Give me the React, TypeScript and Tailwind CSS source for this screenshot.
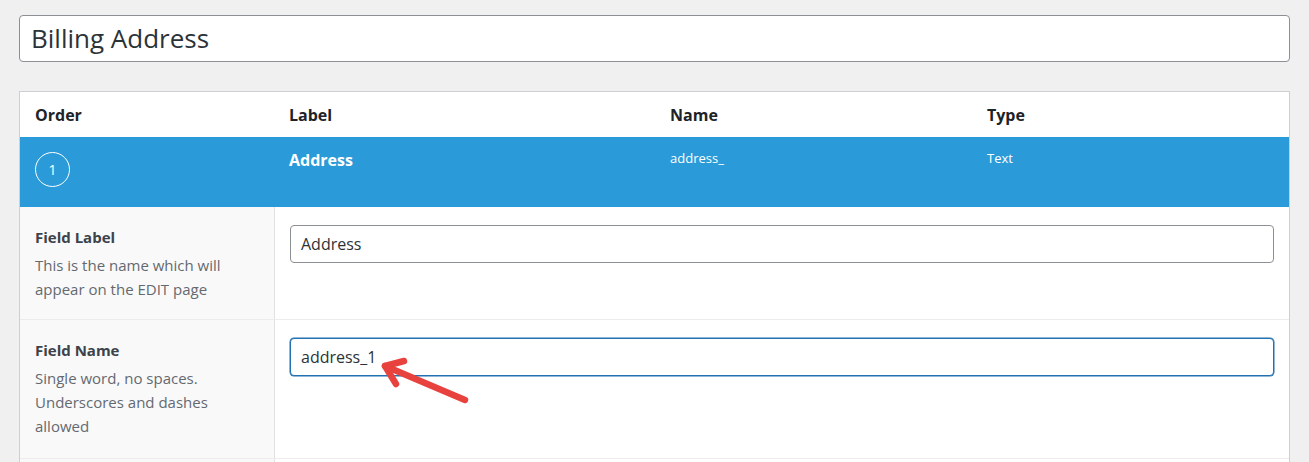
import React from 'react'

const font = { fontFamily: '"Open Sans", "Noto Sans", sans-serif' }

function ArrowMark() {
    return (
        <svg
            className="absolute left-[370px] top-[352px] pointer-events-none"
            width="110"
            height="60"
            viewBox="0 0 110 60"
            fill="none"
        >
            <g stroke="#e8423f" strokeWidth="6.5" strokeLinecap="round" strokeLinejoin="round">
                <path d="M95 48 L15 14" />
                <path d="M34 9 L15 14 L26 32" />
            </g>
        </svg>
    )
}

function FieldRow({
    label,
    lines,
    value,
    focused,
    height
}: {
    label: string
    lines: string[]
    value: string
    focused?: boolean
    height: string
}) {
    return (
        <div className={`flex border-b border-[#ececec] ${height}`}>
            <div className="w-[255px] shrink-0 bg-[#f9f9f9] border-r border-[#e1e1e1] pl-[15px] pr-3 pt-[18px]">
                <div className="text-[15px] leading-[24px] font-bold text-[#3c434a]">{label}</div>
                <div className="mt-[4px]">
                    {lines.map((l) => (
                        <div key={l} className="text-[15px] leading-[24px] text-[#646970]">
                            {l}
                        </div>
                    ))}
                </div>
            </div>
            <div className="flex-1 pl-[15px] pr-[15px] pt-[18px]">
                <div
                    className={`h-[38px] rounded-[4px] bg-white flex items-center px-[10px] text-[16px] text-[#2c3338] border ${
                        focused ? 'border-[#2271b1] shadow-[0_0_0_0.5px_#2271b1]' : 'border-[#8c8f94]'
                    }`}
                >
                    {value}
                </div>
            </div>
        </div>
    )
}

export default function App() {
    return (
        <div className="relative min-h-[462px] bg-[#f0f0f0] px-[19px] pt-[15px] overflow-hidden" style={font}>
            <div className="h-[47px] rounded-[4px] border border-[#8c8f94] bg-white flex items-center pl-[11px] text-[26px] text-[#2c3338]">
                Billing Address
            </div>

            <div className="mt-[29px] border border-[#ccd0d4] bg-white">
                <div className="flex h-[45px] items-center text-[16px] font-bold text-[#1d2327]">
                    <div className="w-[254px] pl-[15px]">Order</div>
                    <div className="w-[381px] pl-[15px]">Label</div>
                    <div className="w-[317px] pl-[15px]">Name</div>
                    <div className="flex-1 pl-[15px]">Type</div>
                </div>

                <div className="flex h-[70px] bg-[#2a9bd8] text-white">
                    <div className="w-[254px] pl-[15px] pt-[15px]">
                        <div className="w-[35px] h-[35px] rounded-full border border-white flex items-center justify-center text-[14px]">
                            1
                        </div>
                    </div>
                    <div className="w-[381px] pl-[15px] pt-[11px] text-[16px] font-bold">Address</div>
                    <div className="w-[317px] pl-[15px] pt-[12px] text-[13px]">address_</div>
                    <div className="flex-1 pl-[15px] pt-[12px] text-[13px]">Text</div>
                </div>

                <FieldRow
                    label="Field Label"
                    lines={['This is the name which will', 'appear on the EDIT page']}
                    value="Address"
                    height="h-[113px]"
                />
                <FieldRow
                    label="Field Name"
                    lines={['Single word, no spaces.', 'Underscores and dashes', 'allowed']}
                    value="address_1"
                    focused
                    height="h-[139px]"
                />
                <div className="flex h-[20px]">
                    <div className="w-[255px] shrink-0 bg-[#f9f9f9] border-r border-[#e1e1e1]" />
                    <div className="flex-1" />
                </div>
            </div>

            <ArrowMark />
        </div>
    )
}
